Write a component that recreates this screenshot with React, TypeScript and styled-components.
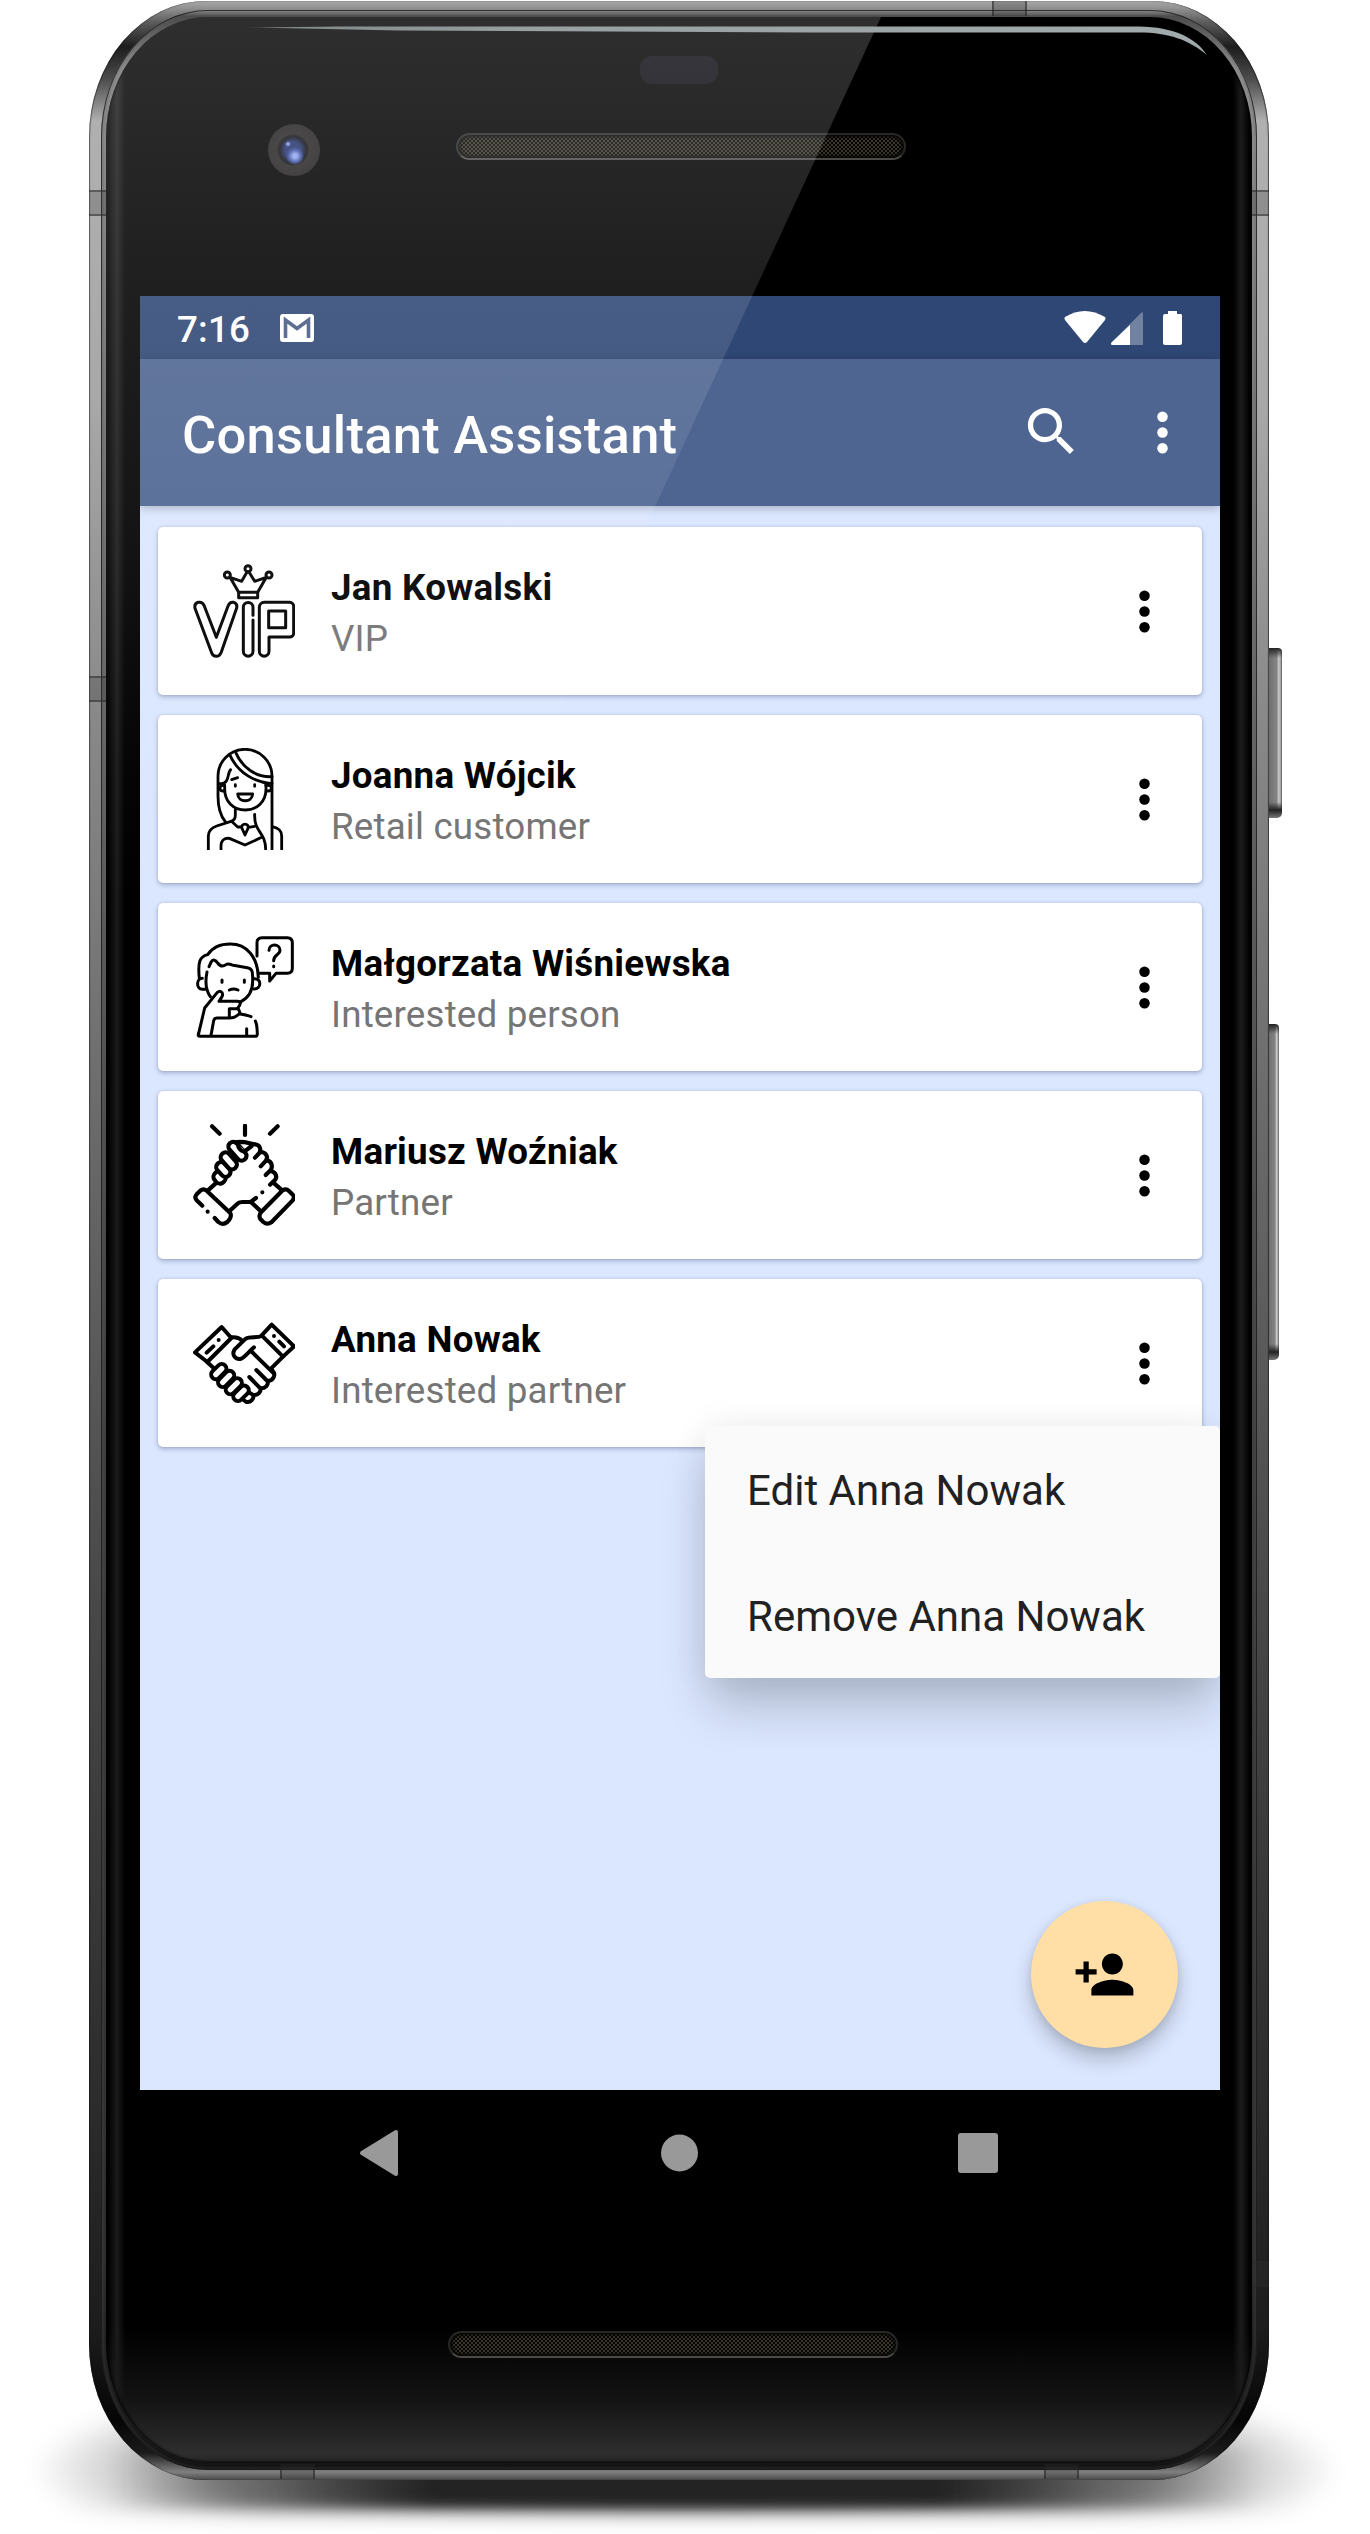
import React from "react";
import styled, { createGlobalStyle, css } from "styled-components";

const GlobalStyle = createGlobalStyle`
  * { box-sizing: border-box; }
  html, body { margin: 0; padding: 0; background: #ffffff; }
  body { font-family: Roboto, "Noto Sans", sans-serif; }
`;

/* ---------- device shell ---------- */

const Stage = styled.main`
  position: relative;
  width: 1370px;
  height: 2534px;
  padding: 1px 101px 0 89px;
  overflow: hidden;
  background: #ffffff;
`;

const WideShadow = styled.div`
  position: absolute;
  left: 30px;
  right: 30px;
  bottom: 22px;
  height: 190px;
  background: radial-gradient(ellipse 50% 62% at 50% 78%, rgba(0, 0, 0, 0.75) 0, rgba(0, 0, 0, 0.42) 72%, rgba(0, 0, 0, 0.2) 86%, transparent 100%);
  filter: blur(10px);
`;

const GroundShadow = styled.div`
  position: absolute;
  left: 110px;
  right: 110px;
  bottom: 27px;
  height: 60px;
  background: linear-gradient(90deg, transparent, rgba(38, 38, 38, 0.4) 14%, #232323 28%, #232323 72%, rgba(38, 38, 38, 0.4) 86%, transparent);
  filter: blur(6px);
`;

const Body = styled.div`
  position: relative;
  width: 1180px;
  height: 2479px;
  padding: 9px 12px 10px;
  border-radius: 117px / 136px;
  background: linear-gradient(
    180deg,
    #a9a9a9 0, #8a8a8a 9px, #5a5a5a 22px, #1d1d1d 46px, #4c4c4c 78px, #b0b0b0 120px,
    #a8a8a8 400px, #8a8a8a 700px, #686868 1150px, #484848 1600px, #2c2c2c 2100px,
    #1c1c1c 2330px, #050505 2420px, #1b1b1b 2452px, #808080 2471px, #4a4a4a 2479px
  );
  box-shadow: inset 1px 0 1px rgba(20, 20, 20, 0.55), inset -1px 0 1px rgba(20, 20, 20, 0.65);
`;

const Rim = styled.div`
  height: 100%;
  padding: 7px 5px;
  border-radius: 107px / 127px;
  background: linear-gradient(180deg, #9a9a9a 0, #4c4c4c 6px, #8d8d8d 60px, #7b7b7b 350px, #5b5b5b 900px, #404040 1400px, #2d2d2d 2250px, #141414 2460px);
  box-shadow: inset 0 0 0 1px rgba(25, 25, 25, 0.8), inset 0 0 0 3px rgba(90, 90, 90, 0.16);
`;

const Face = styled.div`
  position: relative;
  height: 100%;
  padding: 0 32px 0 34px;
  border-radius: 102px / 120px;
  overflow: hidden;
  background:
    linear-gradient(90deg, transparent 2px, #1b1b1b 11px, transparent 19px) left / 22px 100% no-repeat,
    linear-gradient(270deg, transparent 2px, #1b1b1b 11px, transparent 19px) right / 22px 100% no-repeat,
    linear-gradient(180deg, #000 0, #000 2310px, #121212 2380px, #2e2e2e 2437px, #242424 2446px);
  box-shadow: inset 0 0 3px 1px #000;
`;

const Glare = styled.div`
  position: absolute;
  inset: 0;
  z-index: 5;
  pointer-events: none;
  clip-path: polygon(0 0, 775px 0, 367px 884px, 0 884px);
  background: linear-gradient(
    180deg,
    rgba(252, 252, 252, 0.185) 0,
    rgba(252, 252, 252, 0.12) 275px,
    rgba(252, 252, 252, 0.085) 490px,
    rgba(252, 252, 252, 0.065) 570px,
    rgba(252, 252, 252, 0.02) 750px,
    rgba(252, 252, 252, 0) 884px
  );
`;

const TopHighlight = styled.svg`
  position: absolute;
  left: 143px;
  top: 8px;
  z-index: 6;
`;

type SeamProps = { $x: number; $y: number; $vertical?: boolean };
const Seam = styled.i<SeamProps>`
  position: absolute;
  left: ${(p) => p.$x}px;
  top: ${(p) => p.$y}px;
  width: ${(p) => (p.$vertical ? 17 : 35)}px;
  height: ${(p) => (p.$vertical ? 26 : 15)}px;
  background: rgba(50, 50, 50, 0.25);
  ${(p) =>
    p.$vertical
      ? css`border-top: 2px solid rgba(40, 40, 40, 0.5); border-bottom: 2px solid rgba(40, 40, 40, 0.5);`
      : css`border-left: 2px solid rgba(30, 30, 30, 0.5); border-right: 2px solid rgba(30, 30, 30, 0.5);`}
`;

type KeyProps = { $y: number; $h: number; $w: number };
const SideKey = styled.i<KeyProps>`
  position: absolute;
  left: 1180px;
  top: ${(p) => p.$y}px;
  width: ${(p) => p.$w}px;
  height: ${(p) => p.$h}px;
  border-radius: 0 4px 5px 0;
  background:
    linear-gradient(180deg, #222 0, rgba(40, 40, 40, 0) 10px, rgba(40, 40, 40, 0) calc(100% - 16px), #222 calc(100% - 8px), #777 100%),
    linear-gradient(90deg, #6f6f6f 0, #858585 60%, #c8c8c8 75%, #a8a8a8 88%, #555 100%);
`;

/* ---------- top bezel ---------- */

const TopBezel = styled.header`
  height: 279px;
  padding-top: 39px;
`;

const Sensor = styled.div`
  width: 78px;
  height: 28px;
  margin-left: 500px;
  border-radius: 12px;
  background: #0b0b12;
`;

const EarpieceRow = styled.div`
  display: flex;
  align-items: flex-start;
  height: 52px;
  margin: 40px 0 0 128px;
`;

const Camera = styled.div`
  width: 52px;
  height: 52px;
  border-radius: 50%;
  background:
    radial-gradient(circle at 20px 20px, #7f95e8 0 1px, transparent 3px),
    radial-gradient(circle at 27px 32px, #90a5f0 0 2px, #3f55a5 6px, transparent 9px),
    radial-gradient(circle at 25px 26px, #25346c 0 8px, #10131e 13px, #181616 15px, #292626 16px, #242222 25px);
`;

const Grille = styled.div<{ $left: number; $top?: number }>`
  width: 450px;
  height: 27px;
  margin: ${(p) => p.$top ?? 0}px 0 0 ${(p) => p.$left}px;
  border: 2px solid #272725;
  border-bottom-color: #4b4a45;
  border-radius: 14px;
  background:
    radial-gradient(circle, #3d372b 0 0.7px, transparent 1.3px) 0 0 / 4px 4px,
    radial-gradient(circle, #3d372b 0 0.7px, transparent 1.3px) 2px 2px / 4px 4px,
    #040403;
  box-shadow: inset 0 0 3px 2px #050505;
`;

/* ---------- screen ---------- */

const Screen = styled.section`
  position: relative;
  display: flex;
  flex-direction: column;
  width: 1080px;
  height: 1794px;
  overflow: hidden;
  background: #dbe7ff;
`;

const StatusBar = styled.div`
  flex: none;
  display: flex;
  align-items: center;
  height: 63px;
  padding: 0 38px 0 37px;
  background: #2f4774;
  color: #fff;
`;

const Clock = styled.span`
  padding-top: 4px;
  font-size: 36.75px;
  line-height: 44px;
  font-weight: 500;
  letter-spacing: 0.2px;
`;

const MailGlyph = styled.svg`
  margin-left: 30px;
`;

const StatusIcons = styled.svg`
  margin-left: auto;
`;

const AppBar = styled.div`
  flex: none;
  display: flex;
  align-items: center;
  height: 147px;
  padding: 0 26px 0 42px;
  background: #4e6591;
  color: #fff;
  box-shadow: 0 2px 9px rgba(0, 0, 0, 0.25);
  z-index: 1;
`;

const Title = styled.h1`
  flex: 1;
  margin: 0;
  padding-top: 5px;
  font-size: 52.5px;
  line-height: 62px;
  font-weight: 500;
  letter-spacing: 0.26px;
`;

const IconButton = styled.button<{ $gap?: number }>`
  display: grid;
  place-items: center;
  width: 63px;
  height: 63px;
  margin: 0 0 0 ${(p) => p.$gap ?? 0}px;
  padding: 0;
  border: 0;
  background: none;
  color: inherit;
`;

const CardList = styled.ul`
  display: flex;
  flex-direction: column;
  gap: 20px;
  margin: 0;
  padding: 21px 18px;
  list-style: none;
`;

const Card = styled.li`
  display: flex;
  align-items: center;
  height: 168px;
  padding: 0 26px 0 35px;
  border-radius: 5px;
  background: #fff;
  color: #000;
  box-shadow: 0 2px 5px rgba(40, 60, 100, 0.32), 0 0 2px rgba(40, 60, 100, 0.2);
`;

const CardText = styled.div`
  flex: 1;
  margin-left: 36px;
  padding-top: 4px;
  font-size: 36.75px;
  line-height: 51px;
`;

const Name = styled.div`
  font-weight: 700;
  letter-spacing: 0.27px;
`;

const Kind = styled.div`
  color: #757575;
  letter-spacing: 0.18px;
`;

const Menu = styled.div`
  position: absolute;
  left: 565px;
  top: 1130px;
  z-index: 2;
  width: 515px;
  border-radius: 5px;
  background: #fafafa;
  box-shadow: 0 32px 50px -4px rgba(0, 0, 0, 0.2), 0 0 36px rgba(0, 0, 0, 0.07);
`;

const MenuItem = styled.div`
  display: flex;
  align-items: center;
  height: 126px;
  padding: 3px 42px 0;
  color: #212121;
  font-size: 42px;
`;

const Fab = styled.button`
  position: absolute;
  right: 42px;
  bottom: 42px;
  display: grid;
  place-items: center;
  width: 147px;
  height: 147px;
  padding: 0;
  border: 0;
  border-radius: 50%;
  background: #ffdfa6;
  color: #000;
  box-shadow: 0 12px 20px rgba(0, 0, 0, 0.2), 0 2px 9px rgba(0, 0, 0, 0.1);
`;

/* ---------- system navigation & chin ---------- */

const NavBar = styled.nav`
  display: flex;
  align-items: center;
  justify-content: space-between;
  width: 1080px;
  height: 126px;
  padding: 0 222px 0 219px;
`;

const BottomGrille = styled.footer`
  padding-top: 115px;
`;

/* ---------- glyphs ---------- */

const MoreIcon = () => (
  <svg width="63" height="63" viewBox="0 0 24 24" fill="currentColor">
    <circle cx="12" cy="6" r="2" />
    <circle cx="12" cy="12" r="2" />
    <circle cx="12" cy="18" r="2" />
  </svg>
);

const SearchIcon = () => (
  <svg width="63" height="63" viewBox="0 0.3 24 24" fill="currentColor">
    <path d="M15.5 14h-.79l-.28-.27A6.47 6.47 0 0 0 16 9.5 6.5 6.5 0 1 0 9.5 16c1.61 0 3.09-.59 4.23-1.57l.27.28v.79l5 4.99L20.49 19l-4.99-5zm-6 0C7.01 14 5 11.99 5 9.5S7.01 5 9.5 5 14 7.01 14 9.5 11.99 14 9.5 14z" />
  </svg>
);

const PersonAddIcon = () => (
  <svg width="63" height="63" viewBox="0 0 24 24" fill="currentColor">
    <path d="M15 12c2.21 0 4-1.79 4-4s-1.79-4-4-4-4 1.79-4 4 1.79 4 4 4zm-9-2V7H4v3H1v2h3v3h2v-3h3v-2H6zm9 4c-2.67 0-8 1.34-8 4v2h16v-2c0-2.66-5.33-4-8-4z" />
  </svg>
);

const CardIcon = styled.svg<{ $weight: number }>`
  flex: none;
  width: 102px;
  height: 102px;
  fill: none;
  stroke: #000;
  stroke-width: ${(p) => p.$weight};
  stroke-linecap: round;
  stroke-linejoin: round;
`;

const VipIcon = () => (
  <CardIcon $weight={9} viewBox="129 120 306 306">
    <circle cx="232" cy="165" r="9" />
    <circle cx="294" cy="146" r="9" />
    <circle cx="357" cy="165" r="9" />
    <path d="M240 172 266 217H323L349 172 314 184 297 156H291L275 184Z" />
    <path d="M266 217V233H323V217" />
    <path d="M135 265Q132 250 145 247 157 245 162 256L199 352 235 256Q240 245 251 247 263 251 260 264L214 396Q209 409 199 409 188 409 184 396Z" />
    <path d="M309 286V262a14.500 14.500 0 0 0-29 0V394a14.500 14.500 0 0 0 29 0V300" />
    <path d="M328 262a15 15 0 0 1 15-15H419a12 12 0 0 1 12 12V339a12 12 0 0 1-12 12H357V394a14.500 14.500 0 0 1-29 0Z" />
    <path d="M356 273H407V323H356Z" />
  </CardIcon>
);

const WomanIcon = () => (
  <CardIcon $weight={8.5} viewBox="129 684 306 306">
    <path d="M226 905C210 886 204 860 204 828V769A81 81 0 0 1 366 769V988" />
    <path d="M239 704C264 760 315 787 366 791M257 697C276 742 318 773 366 770" />
    <path d="M206 791H215C239 789 231 759 242 749M245 779 263 773" />
    <path d="M224 796H218C207 797 207 812 218 813H222M347 796H355C368 797 367 813 354 813H349" />
    <path d="M224 796V806C224 845 250 870 286 870 321 870 348 845 348 806V794" />
    <path d="M256 794V799M314 794V799" />
    <path d="M263 822H308C307 849 264 849 263 822Z" />
    <path d="M256 869V885C256 895 252 902 243 904L200 918C183 924 175 932 175 948V988M213 988V978C213 961 224 953 238 955L285 975 335 952" />
    <path d="M247 906 263 921H275M296 922 314 919M276 925C271 908 299 908 294 925L285 945Z" />
    <path d="M314 883C312 938 347 935 347 988M367 920C386 924 395 931 395 948V988" />
  </CardIcon>
);

const ThinkingIcon = () => (
  <CardIcon $weight={9} viewBox="129 138 306 306">
    <path d="M321 198V158Q321 143 336 143H412Q427 143 427 158V235Q427 250 412 250H378L359 273V250H330" />
    <path d="M357 181C357 160 390 160 390 181 390 196 371 193 371 212M371 228V230" />
    <path d="M148 265C143 215 149 200 173 194 188 171 213 162 241 162 290 162 323 200 325 262" />
    <path d="M177 230 183 217C189 206 197 210 203 219 212 231 220 230 228 224 236 218 242 224 250 226L292 233C305 235 308 242 308 260V274C308 305 292 325 273 335" />
    <path d="M171 246C166 270 167 300 181 320M157 265C138 265 138 298 157 298H169M313 266C335 265 335 297 312 297" />
    <path d="M216 270V277M283 270V277M238 300Q251 294 264 300" />
    <path d="M146 430 164 354 202 307C213 298 221 310 216 320L207 334H262C274 334 273 342 264 353L270 369C262 378 250 384 238 384H200Q193 384 191 392L183 436" />
    <path d="M238 379V356H262M270 372Q288 374 303 380M316 393C322 405 321 417 322 431Q322 439 314 439H150Q142 439 146 430M290 416V436" />
  </CardIcon>
);

const PartnerIcon = () => (
  <CardIcon $weight={12.5} viewBox="129 132 306 306">
    <path d="M186 139 209 161M285 137V165M383 139 360 161" />
    <path d="M157 377 140 361Q132 352 140 343L151 332Q160 324 170 332L240 398Q246 408 238 419L232 426Q218 437 205 426L194 414M173 395V395" />
    <path d="M398 331Q408 324 417 333L429 345Q435 352 428 361L365 426Q352 436 340 426L331 417Q325 406 333 397Z" />
    <path d="M177 328 203 305M241 391 264 370Q268 366 278 366H302L318 354M305 368 331 392M337 337V337M369 307 394 329" />
    <g fill="#fff">
      <rect x="192" y="274" width="33" height="37" rx="15" transform="rotate(-38 208 292)" />
      <rect x="205" y="244" width="29" height="49" rx="14" transform="rotate(-42 220 268)" />
      <rect x="222" y="214" width="29" height="58" rx="14" transform="rotate(-42 236 243)" />
      <rect x="248" y="181" width="29" height="66" rx="14" transform="rotate(-42 262 214)" />
    </g>
    <path d="M255 187C281 181 298 191 316 193 330 196 334 207 328 219L315 233M263 188C264 207 276 218 287 212L305 198" fill="#fff" />
    <path d="M331 216C351 216 356 235 346 244L332 259M351 241C369 246 368 264 360 272L347 285M362 272C380 277 382 293 374 301L360 314" />
  </CardIcon>
);

const HandshakeIcon = () => (
  <CardIcon $weight={12} viewBox="129 696 306 306" strokeLinejoin="miter">
    <path d="M215 741 135 817 172 846 244 774Z" />
    <path d="M365 734 432 799 399 830 335 766Z" />
    <path d="M170 818 190 799M206 780V780M372 768V768M388 785 402 799" />
    <path d="M244 772Q265 770 276 782M335 768C320 775 301 768 287 776L254 808C244 824 255 838 270 837 282 835 291 820 312 802M302 812 369 878M399 830 363 866M171 846 195 868" />
    <path d="M367 871C379 883 371 902 354 903 355 916 346 925 333 925 332 937 324 945 311 945 311 958 302 968 289 966L281 960" />
    <path d="M319 870 352 903M298 891 331 925M295 936 308 944" />
    <g fill="#fff">
      <rect x="192" y="848" width="28" height="53" rx="14" transform="rotate(45 206 875)" />
      <rect x="214" y="868" width="28" height="57" rx="14" transform="rotate(45 228 897)" />
      <rect x="237" y="890" width="28" height="57" rx="14" transform="rotate(45 251 919)" />
      <rect x="259" y="913" width="28" height="54" rx="14" transform="rotate(45 273 940)" />
    </g>
  </CardIcon>
);

const clients = [
  { name: "Jan Kowalski", kind: "VIP", Icon: VipIcon },
  { name: "Joanna Wójcik", kind: "Retail customer", Icon: WomanIcon },
  { name: "Małgorzata Wiśniewska", kind: "Interested person", Icon: ThinkingIcon },
  { name: "Mariusz Woźniak", kind: "Partner", Icon: PartnerIcon },
  { name: "Anna Nowak", kind: "Interested partner", Icon: HandshakeIcon },
];

export default function App() {
  return (
    <Stage>
      <GlobalStyle />
      <WideShadow />
      <GroundShadow />
      <Body>
        <SideKey $y={647} $h={170} $w={13} />
        <SideKey $y={1023} $h={336} $w={10} />
        <Rim>
          <Face>
            <TopBezel>
              <Sensor />
              <EarpieceRow>
                <Camera />
                <Grille $left={136} $top={9} />
              </EarpieceRow>
            </TopBezel>
            <Screen>
              <StatusBar>
                <Clock>7:16</Clock>
                <MailGlyph width="34" height="28" viewBox="0 0 34 28">
                  <rect width="34" height="28" rx="3" fill="#fff" />
                  <path d="M5.500 24V6L17 14.500 28.500 6V24" fill="none" stroke="#485c85" strokeWidth="3.600" />
                </MailGlyph>
                <StatusIcons width="118" height="36" viewBox="0 1 118 36" fill="#fff">
                  <path d="M1 8Q20.500-4 41 8 42 9 41 11L23 33Q21 35 19 33L1 11Q0 9 1 8Z" />
                  <path d="M77 4Q79 2 79 5V36H48Q46 35 48 33Z" opacity=".32" />
                  <path d="M66 16V36H48Q46 35 48 33Z" />
                  <path d="M104 2H113V5H117Q118 5 118 7V34Q118 36 116 36H101Q99 36 99 34V7Q99 5 101 5H104Z" />
                </StatusIcons>
              </StatusBar>
              <AppBar>
                <Title>Consultant Assistant</Title>
                <IconButton aria-label="Search"><SearchIcon /></IconButton>
                <IconButton aria-label="More options" $gap={48}><MoreIcon /></IconButton>
              </AppBar>
              <CardList>
                {clients.map(({ name, kind, Icon }) => (
                  <Card key={name}>
                    <Icon />
                    <CardText>
                      <Name>{name}</Name>
                      <Kind>{kind}</Kind>
                    </CardText>
                    <IconButton aria-label="Client options"><MoreIcon /></IconButton>
                  </Card>
                ))}
              </CardList>
              <Menu>
                <MenuItem>Edit Anna Nowak</MenuItem>
                <MenuItem>Remove Anna Nowak</MenuItem>
              </Menu>
              <Fab aria-label="Add client"><PersonAddIcon /></Fab>
            </Screen>
            <NavBar>
              <svg width="40" height="52" viewBox="0 0 40 52">
                <path d="M3 26 37 5V47Z" fill="#999" stroke="#999" strokeWidth="4" strokeLinejoin="round" />
              </svg>
              <svg width="38" height="38" viewBox="0 0 38 38"><circle cx="19.500" cy="19" r="18.500" fill="#999" /></svg>
              <svg width="40" height="40" viewBox="0 0 40 40"><rect width="40" height="40" rx="3" fill="#999" /></svg>
            </NavBar>
            <BottomGrille>
              <Grille $left={308} />
            </BottomGrille>
            <Glare />
            <TopHighlight width="962" height="34" viewBox="0 0 962 34">
              <defs>
                <linearGradient id="edge" x1="0" x2="1" y1="0" y2="0">
                  <stop offset="0" stopColor="#7f8685" />
                  <stop offset=".3" stopColor="#98a0a2" />
                  <stop offset="1" stopColor="#a2abab" />
                </linearGradient>
              </defs>
              <path d="M0 2.500 90 1.500H890C925 2 947 13 958 30 940 15 920 7.500 890 7.500H560L150 5.500Z" fill="url(#edge)" />
            </TopHighlight>
          </Face>
        </Rim>
        <Seam $vertical $x={0} $y={189} />
        <Seam $vertical $x={0} $y={675} />
        <Seam $vertical $x={1163} $y={189} />
        <Seam $vertical $x={1163} $y={2260} />
        <Seam $x={903} $y={0} />
        <Seam $x={191} $y={2463} />
        <Seam $x={955} $y={2463} />
      </Body>
    </Stage>
  );
}
